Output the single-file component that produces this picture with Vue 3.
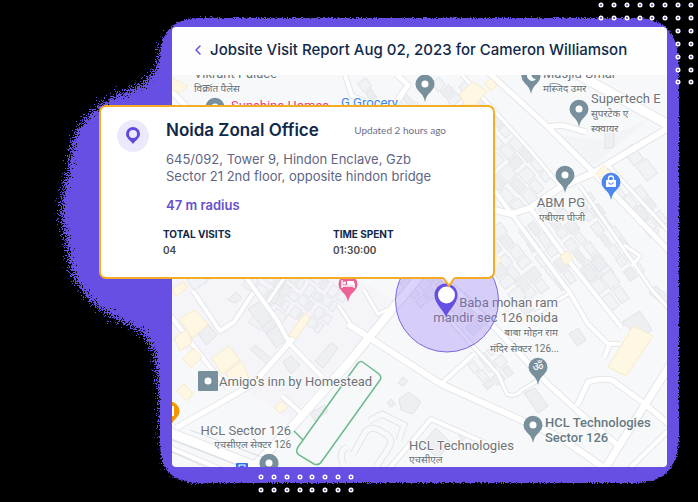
<script setup>
const roads = [
  { w: 9, d: 'M570 70L672 127' },
  { w: 5, d: 'M486 70L548 127L593 172L672 254' },
  { w: 6, d: 'M670 127L655 136L593 173L561 187L530 208L511 214L494 210' },
  { w: 5, d: 'M549 127Q560 124 569 127T586 132' },
  { w: 3, d: 'M606 163L672 235' },
  { w: 3, d: 'M462 75L530 150L561 187' },
  { w: 4, d: 'M494 190L570 293L588 324L608 344H620' },
  { w: 4, d: 'M530 208L561 251L595 294L622 328' },
  { w: 3, d: 'M580 186L652 290L672 312' },
  { w: 4, d: 'M610 344L604 358' },
  { w: 3, d: 'M568 294L535 314' },
  { w: 3, d: 'M624 245L640 256L632 266' },
  { w: 6, d: 'M348 324L441 384L561 438L610 472' },
  { w: 4, d: 'M441 384L474 354' },
  { w: 3, d: 'M448 318L498 374L507 394Q515 398 522 390L537 381' },
  { w: 5, d: 'M440 275L498 331L548 384L581 414L621 448' },
  { w: 5, d: 'M577 406L588 382Q600 378 612 380L645 404L672 427' },
  { w: 7, d: 'M672 362L641 411L604 470' },
  { w: 4, d: 'M672 427L626 472' },
  { w: 4, d: 'M388 470L431 419L485 443' },
  { w: 8, d: 'M420 276L395 306L350 361L300 418L247 474' },
  { w: 3, d: 'M364 290L378 314L395 306' },
  { w: 4, d: 'M170 315L213 371L228 388' },
  { w: 4, d: 'M193 291L220 331L234 322L253 293' },
  { w: 4, d: 'M245 276L277 320L290 344L323 378' },
  { w: 5, d: 'M296 335L253 384L176 428' },
  { w: 4, d: 'M282 396L302 414' },
  { w: 9, d: 'M168 432L270 472' },
  { w: 4, d: 'M168 447L232 474' },
  { w: 5, d: 'M172 92L188 108' },
  { w: 4, d: 'M345 75L352 96L376 105' },
  { w: 5, d: 'M397 75L408 85L394 106' },
  { w: 3, d: 'M284 278L268 302' },
  { w: 3, d: 'M338 305L354 329' }
]

// Rows of plots: origin, rotation in degrees, columns, rows, cell width, cell height
const blocks = [
  [300, 262, 34, 6, 4, 10, 13],
  [258, 262, 34, 3, 2, 13, 15],
  [180, 268, -32, 2, 2, 17, 14],
  [264, 300, 34, 2, 2, 15, 15],
  [466, 80, 46, 5, 1, 14, 12],
  [440, 76, 46, 4, 1, 12, 15],
  [497, 112, 48, 6, 2, 15, 14],
  [497, 152, 48, 4, 2, 16, 15],
  [500, 222, 52, 6, 2, 14, 15],
  [535, 220, 54, 5, 2, 15, 12],
  [555, 197, 52, 7, 2, 14, 12],
  [590, 192, 54, 7, 2, 14, 11],
  [612, 176, 50, 5, 1, 15, 12],
  [634, 143, 52, 2, 1, 20, 17],
  [640, 185, 52, 3, 2, 16, 12],
  [600, 255, 54, 3, 2, 18, 14],
  [400, 283, -40, 3, 3, 13, 12],
  [456, 283, 46, 4, 2, 13, 13],
  [500, 262, 52, 4, 1, 15, 16],
  [494, 345, 52, 3, 3, 12, 12],
  [366, 78, 56, 2, 1, 12, 12],
  [407, 92, 46, 2, 2, 13, 11]
]

const plots = blocks.flatMap(([x, y, angle, cols, rows, w, h], b) =>
  Array.from({ length: cols * rows }, (_, i) => {
    const col = i % cols
    const row = Math.floor(i / cols)
    const trim = (i * 7 + b * 3) % 4
    return {
      key: `${b}-${i}`,
      x: col * w,
      y: row * h + (trim > 2 ? 2 : 0),
      w: w - 2 - (trim === 1 ? 3 : 0),
      h: h - 2 - trim,
      place: `translate(${x} ${y}) rotate(${angle})`,
      dark: (i + b) % 3 === 0
    }
  })
)

const buildings = [
  'M248 309L260 301L274 317L262 327Z',
  'M266 333L278 325L287 339L276 348Z',
  'M315 361L331 343L338 348L323 368Z',
  'M283 362L291 356L300 365L291 374Z',
  'M198 333L208 324L217 335L206 345Z',
  'M228 300L236 292L242 298L235 303Z',
  'M255 345L273 360L269 366L251 350Z',
  'M310 413L325 405L328 411L315 421Z',
  'M605 130H614V147L605 149Z',
  'M398 383L403 377L408 381L403 386Z',
  'M387 403L391 399L395 404L391 407Z',
  'M399 399L409 392L421 402L413 414L401 410Z',
  'M524 393L535 388L548 406L538 413Z',
  'M569 334L578 328L586 340L577 346Z',
  'M649 293L656 286L668 296V309Z',
  'M622 322L640 311L652 330L640 338Z',
  'M436 428L450 442L439 458L421 445Z',
  'M455 427L470 434L462 441Z'
]

const yellow = [
  'M179 319L195 310L208 325L192 338Z',
  'M174 338L187 329L192 343L180 351Z',
  'M183 359L194 348L202 357L191 368Z',
  'M212 358L229 346L240 360L222 374Z',
  'M226 373L242 361L249 379L233 386Z',
  'M289 335L305 313L310 318L296 339Z',
  'M177 391L184 384L193 394L187 401Z',
  'M274 408L282 401L287 408L280 413Z',
  'M172 78L188 86L180 93L172 90Z',
  'M459 94L473 82L487 91L475 105H465Z',
  'M485 84L491 78L497 85L491 91Z',
  'M596 173L604 165L611 174L602 182Z',
  'M560 256L567 251L573 259L565 265Z',
  'M608 367L633 326L653 336L626 376Z',
  'M494 254L502 260L494 268Z',
  'M172 289L184 282L187 288L176 296Z'
]

const pins = [
  { x: 425, y: 84, kind: 'dot' },
  { x: 531, y: 76, kind: 'moon' },
  { x: 579, y: 109, kind: 'dot' },
  { x: 565, y: 175, kind: 'dot' },
  { x: 611, y: 182, kind: 'bag' },
  { x: 538, y: 367, kind: 'om' },
  { x: 533, y: 425, kind: 'dot' },
  { x: 269, y: 463, kind: 'dot' },
  { x: 215, y: 107, kind: 'dot' },
  { x: 348, y: 284, kind: 'bed' },
  { x: 170, y: 411, kind: 'food' }
]

const labels = [
  { x: 194, y: 78, t: 'Vikrant Palace' },
  { x: 194, y: 92, t: 'विक्रांत पैलेस', c: 'hindi' },
  { x: 231, y: 110, t: 'Sunshine Homes', c: 'pink' },
  { x: 341, y: 107, t: 'G Grocery', c: 'blue' },
  { x: 543, y: 78, t: 'Masjid Umar' },
  { x: 543, y: 92, t: 'मस्जिद उमर', c: 'hindi' },
  { x: 591, y: 103, t: 'Supertech E' },
  { x: 591, y: 117, t: 'सुपरटेक ए', c: 'hindi' },
  { x: 591, y: 132, t: 'स्क्वायर', c: 'hindi' },
  { x: 585, y: 207, t: 'ABM PG', c: 'end' },
  { x: 585, y: 221, t: 'एबीएम पीजी', c: 'hindi end' },
  { x: 558, y: 307, t: 'Baba mohan ram', c: 'end' },
  { x: 558, y: 322, t: 'mandir sec 126 noida', c: 'end' },
  { x: 558, y: 336, t: 'बाबा मोहन राम', c: 'hindi end' },
  { x: 559, y: 352, t: 'मंदिर सेक्टर 126...', c: 'hindi end' },
  { x: 219, y: 386, t: "Amigo's inn by Homestead" },
  { x: 291, y: 435, t: 'HCL Sector 126', c: 'end' },
  { x: 291, y: 448, t: 'एचसीएल सेक्टर 126', c: 'hindi end' },
  { x: 409, y: 450, t: 'HCL Technologies' },
  { x: 409, y: 463, t: 'एचसीएल', c: 'hindi' },
  { x: 545, y: 427, t: 'HCL Technologies', c: 'strong' },
  { x: 545, y: 442, t: 'Sector 126', c: 'strong' }
]

const dotRows = (cols, rows, keep = () => true) =>
  Array.from({ length: cols * rows }, (_, i) => ({ c: i % cols, r: Math.floor(i / cols) }))
    .filter(keep)
    .map(({ c, r }) => ({ x: 3 + Math.round(c * 12.85), y: 3 + Math.round(r * 12.9) }))

const topDots = dotRows(8, 7, ({ c, r }) => r < 2 || c > 5)
const bottomDots = dotRows(8, 2)
</script>

<template>
  <main class="stage">
    <svg class="blob" viewBox="0 0 698 502" preserveAspectRatio="none" aria-hidden="true">
      <defs>
        <filter id="grain" x="-5%" y="-5%" width="110%" height="110%">
          <feTurbulence type="fractalNoise" baseFrequency="0.85" numOctaves="2" seed="4" />
          <feDisplacementMap in="SourceGraphic" scale="26" xChannelSelector="R" yChannelSelector="G" />
        </filter>
        <filter id="fine" x="-5%" y="-5%" width="110%" height="110%">
          <feTurbulence type="fractalNoise" baseFrequency="0.8" numOctaves="1" seed="9" />
          <feDisplacementMap in="SourceGraphic" scale="5" xChannelSelector="R" yChannelSelector="G" />
        </filter>
      </defs>
      <path
        filter="url(#grain)"
        fill="#6650e2"
        d="M215 23C180 21 163 32 159 57C155 78 144 84 122 93C98 102 75 124 72 145C70 166 62 188 61 208C60 224 68 240 68 255C71 285 93 308 122 322C145 332 151 340 155 360C162 400 160 425 163 455C166 472 185 480 215 480Z"
      />
      <path
        filter="url(#fine)"
        fill="#6650e2"
        d="M196 18H640Q679 20 679 66V436Q679 483 635 483H196Q160 482 160 444V60Q160 20 196 18Z"
      />
    </svg>
    <svg class="dots dots-top" width="96" height="84" aria-hidden="true">
      <g v-for="(d, i) in topDots" :key="i">
        <circle :cx="d.x" :cy="d.y" r="2.5" fill="#fff" />
        <circle :cx="d.x" :cy="d.y" r="1.1" fill="#5c4bd4" />
      </g>
    </svg>
    <svg class="dots dots-bottom" width="96" height="20" aria-hidden="true">
      <g v-for="(d, i) in bottomDots" :key="i">
        <circle :cx="d.x" :cy="d.y" r="2.5" fill="#fff" />
        <circle :cx="d.x" :cy="d.y" r="1.1" fill="#5c4bd4" />
      </g>
    </svg>

    <section class="report">
      <header class="bar">
        <button class="back" type="button" aria-label="Back">
          <svg width="8" height="12" viewBox="0 0 8 12" fill="none">
            <path d="M6 2L2 6L6 10" stroke="#6650e2" stroke-width="1.5" stroke-linecap="round" stroke-linejoin="round" />
          </svg>
        </button>
        <h1>Jobsite Visit Report Aug 02, 2023 for Cameron Williamson</h1>
      </header>

      <svg class="map" viewBox="172 75 495 392" role="img" aria-label="Map">
        <rect x="172" y="75" width="495" height="392" fill="#f7f8fa" />
        <path d="M172 270H340L395 300L290 420L172 340Z" fill="#f4f4f9" />
        <path d="M549 134L600 140L648 120L592 166Z" fill="#f3f4f7" />
        <rect
          v-for="p in plots"
          :key="p.key"
          :x="p.x"
          :y="p.y"
          :width="p.w"
          :height="p.h"
          :transform="p.place"
          :fill="p.dark ? '#edeef2' : '#f2f3f6'"
          stroke="#e4e6ea"
        />
        <g fill="#eeeff2" stroke="#e1e3e7">
          <path v-for="d in buildings" :key="d" :d="d" />
        </g>
        <g fill="none" stroke="#e3e5e9" stroke-width="7">
          <path d="M353 454L366 431Q371 426 379 430L387 435Q394 440 388 449L376 467" />
          <path d="M369 421L382 414L404 425L399 440" />
          <path d="M343 464Q338 452 347 447" />
        </g>
        <g fill="none" stroke="#f8f9fa" stroke-width="5">
          <path d="M353 454L366 431Q371 426 379 430L387 435Q394 440 388 449L376 467" />
          <path d="M369 421L382 414L404 425L399 440" />
          <path d="M343 464Q338 452 347 447" />
        </g>
        <g fill="none" stroke="#e4e6ea" stroke-linejoin="round">
          <path v-for="r in roads" :key="r.d" :d="r.d" :stroke-width="r.w + 2" />
        </g>
        <g fill="none" stroke="#fff" stroke-linejoin="round">
          <path v-for="r in roads" :key="r.d" :d="r.d" :stroke-width="r.w" />
        </g>
        <g fill="#fdf7e4" stroke="#f7ebc8">
          <path v-for="d in yellow" :key="d" :d="d" />
        </g>
        <g fill="none" stroke="#dadde3">
          <path d="M172 440L250 470M172 452L212 470M190 430L275 462" />
        </g>
        <path
          d="M358 363Q361 360 364 363L379 374Q382 377 380 380L322 461Q319 466 314 464L299 455Q295 452 298 447ZM294 431L303 440"
          fill="none"
          stroke="#6dbb8c"
          stroke-width="1.5"
        />

        <text v-for="l in labels" :key="l.t + l.y" :x="l.x" :y="l.y" class="place" :class="l.c">{{ l.t }}</text>

        <g v-for="p in pins" :key="`${p.x}-${p.y}`" :transform="`translate(${p.x} ${p.y})`" class="pin" :class="p.kind">
          <path d="M0 18C-1 13-3 10-6 7.500A9.500 9.500 0 1 1 6 7.500C3 10 1 13 0 18Z" />
          <circle v-if="p.kind === 'dot'" r="3.500" fill="#fff" />
          <path v-if="p.kind === 'moon'" d="M2 -5A5 5 0 1 0 5 3A4.500 4.500 0 0 1 2 -5Z" class="glyph" />
          <g v-if="p.kind === 'bag'">
            <path d="M-5 -2H5V5H-5Z" class="glyph" />
            <path d="M-2.500 -2V-3.500A2.500 2.500 0 0 1 2.500 -3.500V-2" fill="none" stroke="#fff" stroke-width="1.300" />
            <path d="M-2.500 0.500Q0 4 2.500 0.500" fill="none" stroke="#4c86ee" stroke-width="1.200" />
          </g>
          <text v-if="p.kind === 'om'" y="4" class="om-sign">ॐ</text>
          <g v-if="p.kind === 'bed'">
            <path d="M-6 -4V4M-6 2H6V4M6 2V-1" fill="none" stroke="#fff" stroke-width="1.500" />
            <path d="M-1 -3H6V1H-1Z" class="glyph" />
            <circle cx="-3.500" cy="-1" r="1.500" class="glyph" />
          </g>
          <path v-if="p.kind === 'food'" d="M3 -5V5" stroke="#fff" stroke-width="2" />
        </g>

        <rect x="198" y="371" width="20" height="20" rx="1" fill="#78909c" />
        <circle cx="208" cy="381" r="3.500" fill="#fff" />
        <rect x="236" y="463" width="12" height="10" rx="1" fill="#2f6fe8" />
        <rect x="239" y="465" width="6" height="6" fill="none" stroke="#fff" />

        <circle cx="447" cy="300.500" r="51.500" fill="#8b6cf5" fill-opacity="0.300" stroke="#7d68dd" />
        <path d="M446 317C443 309 434.500 304 434.500 295A11.500 11.500 0 1 1 457.500 295C457.500 304 449 309 446 317Z" fill="#6650e2" />
        <circle cx="446.500" cy="295" r="8.500" fill="#fff" />
      </svg>

      <article class="card">
        <span class="badge">
          <svg width="16" height="20" viewBox="0 0 16 20" aria-hidden="true">
            <path
              fill="#6049dc"
              fill-rule="evenodd"
              d="M8 1A7 7 0 0 0 1 8C1 12 5 14 8 18C11 14 15 12 15 8A7 7 0 0 0 8 1ZM8 4A4 4 0 1 1 8 12A4 4 0 1 1 8 4Z"
            />
          </svg>
        </span>
        <div class="details">
          <div class="title-row">
            <h2>Noida Zonal Office</h2>
            <span class="updated">Updated 2 hours ago</span>
          </div>
          <p class="address">645/092, Tower 9, Hindon Enclave, Gzb<br />Sector 21 2nd floor, opposite hindon bridge</p>
          <p class="radius">47 m radius</p>
          <dl class="stats">
            <div>
              <dt>TOTAL VISITS</dt>
              <dd>04</dd>
            </div>
            <div>
              <dt>TIME SPENT</dt>
              <dd>01:30:00</dd>
            </div>
          </dl>
        </div>
        <svg class="tail" width="16" height="12" viewBox="0 0 16 12" aria-hidden="true">
          <path d="M1 0H15V1L13 2L8 10L3 2L1 1Z" fill="#fff" />
          <path d="M0 2H1Q3 2 4 4L8 10L12 4Q13 2 15 2H16" fill="none" stroke="#f5ac25" stroke-width="2" />
        </svg>
      </article>
    </section>
  </main>
</template>

<style>
body {
  margin: 0;
  background: #000;
}
</style>

<style scoped>
.stage {
  position: relative;
  box-sizing: border-box;
  min-height: 100vh;
  padding: 27px 31px 35px 172px;
  overflow: hidden;
  background: #000;
  font-family: Inter, 'Liberation Sans', sans-serif;
}
.blob {
  position: absolute;
  inset: 0;
  width: 100%;
  height: 100%;
}
.dots {
  position: absolute;
}
.dots-top {
  top: 2px;
  right: 4px;
  height: 88px;
}
.dots-bottom {
  bottom: 8px;
  left: 258px;
}
.report {
  position: relative;
}
.bar {
  display: flex;
  box-sizing: border-box;
  align-items: center;
  gap: 7px;
  height: 48px;
  padding: 0 20px 2px 21px;
  border-radius: 4px 4px 0 0;
  background: #fefeff;
}
.back {
  display: flex;
  padding: 0 1px;
  border: 0;
  background: none;
}
h1,
h2,
p,
dl,
dd {
  margin: 0;
}
h1 {
  color: #10294b;
  font-size: 15px;
  font-weight: 500;
  line-height: 20px;
  white-space: nowrap;
}
.map {
  display: block;
  width: 100%;
  border-radius: 0 0 4px 4px;
}
.place {
  fill: #6f7377;
  font-family: Roboto, 'Noto Sans', sans-serif;
  font-size: 13px;
  paint-order: stroke;
  stroke: #fafbfc;
  stroke-width: 2px;
}
.hindi {
  fill: #667078;
  font-size: 10px;
}
.end {
  text-anchor: end;
}
.pink {
  fill: #e83e70;
}
.blue {
  fill: #4285e8;
}
.strong {
  fill: #667982;
  font-weight: 500;
}
.pin {
  fill: #78909c;
}
.pin.bag {
  fill: #4c86ee;
}
.pin.bed {
  fill: #ec6297;
}
.pin.food {
  fill: #f29900;
}
.pin .glyph {
  fill: #fff;
}
.om-sign {
  fill: #fff;
  font-family: 'Noto Sans', sans-serif;
  font-size: 12px;
  text-anchor: middle;
}
.card {
  position: absolute;
  top: 78px;
  left: -73px;
  display: flex;
  box-sizing: border-box;
  width: 80%;
  padding: 11px 16px 19px;
  border: 2px solid #f5ac25;
  border-radius: 7px;
  background: #fff;
}
.badge {
  display: flex;
  flex: none;
  align-items: center;
  justify-content: center;
  width: 32px;
  height: 32px;
  margin-top: 2px;
  border-radius: 50%;
  background: #ede9fd;
}
.details {
  flex: 1;
  padding-left: 14px;
}
.title-row {
  display: flex;
  align-items: center;
  justify-content: space-between;
  padding: 0 31px 0 3px;
}
h2 {
  color: #10294b;
  font-size: 17px;
  font-weight: 600;
  line-height: 24px;
}
.updated {
  color: #6b6f8a;
  font-family: Lato, sans-serif;
  font-size: 10px;
}
.address {
  padding: 9px 0 0 3px;
  color: #5f6583;
  font-size: 13px;
  line-height: 17px;
  white-space: nowrap;
}
.radius {
  padding: 12px 0 0 3px;
  color: #6650cf;
  font-size: 13px;
  font-weight: 600;
  line-height: 17px;
}
.stats {
  display: grid;
  grid-template-columns: 170px 1fr;
  padding-top: 12px;
}
dt,
dd {
  font-size: 10px;
  line-height: 16px;
}
dt {
  color: #10294b;
  font-weight: 700;
}
dd {
  color: #484848;
  font-weight: 600;
}
.tail {
  position: absolute;
  right: 36px;
  bottom: -11px;
}
</style>
